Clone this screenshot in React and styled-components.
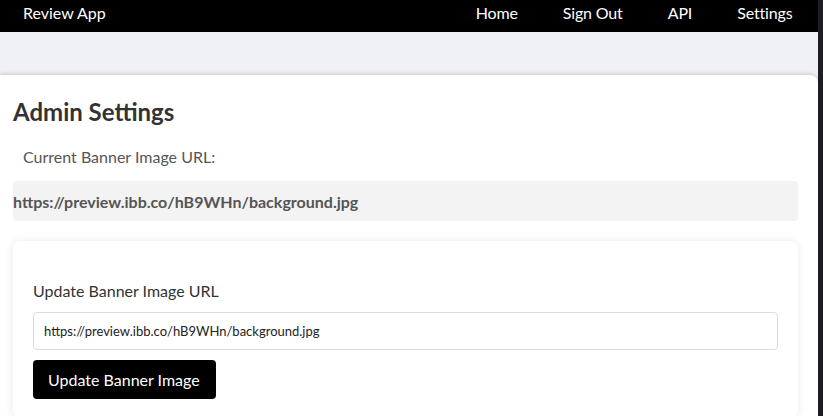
import React from "react";
import styled, { createGlobalStyle } from "styled-components";

const Global = createGlobalStyle`
  html, body { margin: 0; padding: 0; background: #1d1d23; }
  body { font-family: Lato, "Open Sans", sans-serif; }
  * { box-sizing: border-box; }
`;

const Shell = styled.div`
  display: flex;
  min-height: 416px;
`;

const Page = styled.div`
  flex: 1;
  display: flex;
  flex-direction: column;
  background: #f0f1f4;
  min-width: 0;
`;

const Scrollbar = styled.div`
  width: 5px;
  flex: none;
  background: #1d1d23;
`;

const Nav = styled.nav`
  height: 32px;
  background: #000;
  display: flex;
  align-items: center;
  padding: 0 3px 8px 23px;
  color: #fff;
  font-size: 16px;
`;

const Brand = styled.div`
  flex: 1;
`;

const NavLinks = styled.div`
  display: flex;
`;

const NavLink = styled.a`
  color: #fff;
  text-decoration: none;
  padding: 0 22.5px;
  letter-spacing: -0.15px;
`;

const Spacer = styled.div`
  height: 43px;
`;

const Panel = styled.main`
  flex: 1;
  background: #fff;
  border-top-right-radius: 8px;
  box-shadow: 0 -1px 4px rgba(0, 0, 0, 0.18);
  padding: 22px 20px 20px 13px;
`;

const Title = styled.h1`
  margin: 0;
  font-size: 24px;
  line-height: 29px;
  font-weight: 700;
  color: #333;
`;

const CurrentLabel = styled.p`
  margin: 21px 0 0 10px;
  font-size: 16px;
  line-height: 19px;
  color: #555;
`;

const CurrentValue = styled.div`
  margin-top: 15px;
  background: #f3f3f3;
  border-radius: 4px;
  padding: 10.5px 0;
  font-size: 16px;
  line-height: 19px;
  font-weight: 700;
  color: #555;
`;

const Card = styled.section`
  margin-top: 20px;
  background: #fff;
  border-radius: 8px;
  box-shadow: 0 0 10px rgba(0, 0, 0, 0.09);
  padding: 40px 20px 20px;
  display: flex;
  flex-direction: column;
  align-items: flex-start;
`;

const FieldLabel = styled.label`
  font-size: 16px;
  line-height: 19px;
  color: #333;
`;

const Input = styled.input`
  margin-top: 11.5px;
  width: 100%;
  height: 38px;
  border: 1px solid #dcdcdc;
  border-radius: 4px;
  padding: 0 10px;
  font-family: Lato, sans-serif;
  font-size: 13px;
  color: #222;
  background: #fff;
  outline: none;
`;

const Button = styled.button`
  margin-top: 10px;
  height: 39px;
  padding: 0 16px 0 15px;
  background: #000;
  color: #fff;
  border: none;
  border-radius: 4px;
  font-family: Lato, sans-serif;
  font-size: 16px;
  cursor: pointer;
`;

export default function App() {
  const url = "https://preview.ibb.co/hB9WHn/background.jpg";
  return (
    <>
      <Global />
      <Shell>
        <Page>
          <Nav>
            <Brand>Review App</Brand>
            <NavLinks>
              <NavLink href="#">Home</NavLink>
              <NavLink href="#">Sign Out</NavLink>
              <NavLink href="#">API</NavLink>
              <NavLink href="#">Settings</NavLink>
            </NavLinks>
          </Nav>
          <Spacer />
          <Panel>
            <Title>Admin Settings</Title>
            <CurrentLabel>Current Banner Image URL:</CurrentLabel>
            <CurrentValue>{url}</CurrentValue>
            <Card>
              <FieldLabel htmlFor="banner">Update Banner Image URL</FieldLabel>
              <Input id="banner" defaultValue={url} />
              <Button>Update Banner Image</Button>
            </Card>
          </Panel>
        </Page>
        <Scrollbar />
      </Shell>
    </>
  );
}
